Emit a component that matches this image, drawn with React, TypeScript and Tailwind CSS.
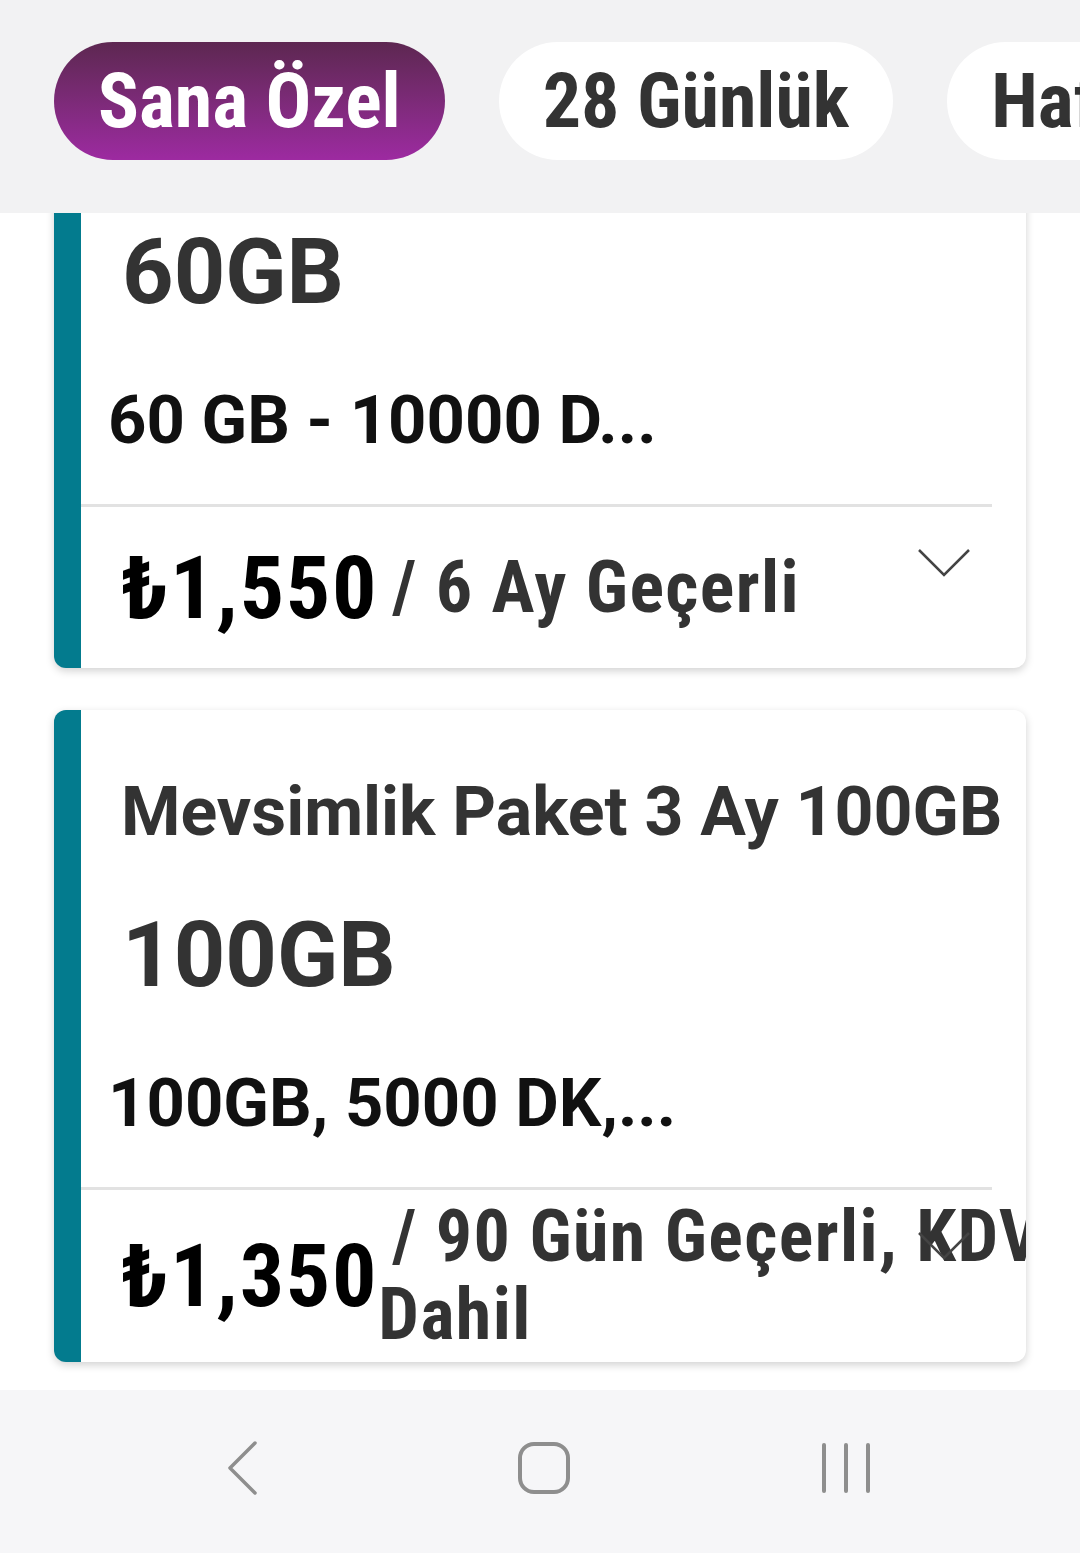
import React from "react";

const narrow = "font-['Liberation_Sans_Narrow','Roboto_Condensed',Roboto,sans-serif]";
const roboto = "font-['Roboto',sans-serif]";

type Pkg = {
  title: string;
  size: string;
  desc: string;
  price: string;
  terms: string;
};

const packages: Pkg[] = [
  {
    title: "Mevsimlik Paket 6 Ay 60GB",
    size: "60GB",
    desc: "60 GB - 10000 D...",
    price: "₺1,550",
    terms: "/ 6 Ay Geçerli",
  },
  {
    title: "Mevsimlik Paket 3 Ay 100GB",
    size: "100GB",
    desc: "100GB, 5000 DK,...",
    price: "₺1,350",
    terms: "/ 90 Gün Geçerli, KDV Dahil",
  },
];

function Chevron() {
  return (
    <svg width="56" height="32" viewBox="0 0 56 32" fill="none" className="absolute top-[40px] right-[54px]">
      <path d="M3 3 L28 28 L53 3" stroke="#444" strokeWidth="2.5" />
    </svg>
  );
}

function PackageCard({ pkg }: { pkg: Pkg }) {
  return (
    <div className="relative bg-white rounded-xl border-l-[27px] border-[#037b8e] shadow-[0_3px_8px_rgba(0,0,0,0.18)] overflow-hidden">
      <div className={`${roboto} pt-[62px]`}>
        <div className="pl-[40px] text-[68px] leading-[80px] font-bold text-[#333] whitespace-nowrap">{pkg.title}</div>
        <div className="pl-[41px] mt-[54px] text-[90px] leading-[100px] font-bold text-[#333]">{pkg.size}</div>
        <div className="pl-[27px] mt-[58px] text-[67px] leading-[78px] font-bold text-[#111]">{pkg.desc}</div>
      </div>
      <div className="mt-[45px] mr-[34px] h-[3px] bg-[#e2e2e2]" />
      <div className={`relative ${narrow} min-h-[161px] py-[8px] pl-[40px] flex items-center`}>
        <div className="text-[88px] leading-[96px] tracking-[0.02em] font-bold text-black whitespace-nowrap">{pkg.price}</div>
        <div className="w-[700px] shrink-0 indent-[14px] text-[72px] leading-[78px] tracking-[0.02em] font-bold text-[#333]">
          {pkg.terms}
        </div>
        <Chevron />
      </div>
    </div>
  );
}

export default function App() {
  return (
    <div className="w-[1080px] h-[1553px] flex flex-col bg-white overflow-hidden">
      <div className={`${narrow} h-[213px] shrink-0 bg-[#f2f2f3] pl-[54px] pt-[42px] flex items-start gap-[54px] overflow-hidden`}>
        <div className="shrink-0 h-[118px] px-[44px] rounded-full bg-gradient-to-b from-[#5d2751] to-[#9d2aa1] flex items-center text-white text-[76px] font-bold">
          Sana Özel
        </div>
        <div className="shrink-0 h-[118px] px-[44px] rounded-full bg-white flex items-center text-[#333] text-[76px] font-bold">
          28 Günlük
        </div>
        <div className="shrink-0 h-[118px] px-[44px] rounded-full bg-white flex items-center text-[#333] text-[76px] font-bold">
          Haftalık
        </div>
      </div>

      <div className="flex-1 overflow-hidden">
        <div className="-mt-[186px] px-[54px] flex flex-col gap-[42px]">
          {packages.map((p) => (
            <PackageCard key={p.title} pkg={p} />
          ))}
        </div>
      </div>

      <div className="h-[163px] shrink-0 bg-[#f6f6f8] flex items-center justify-center pl-[8px] pb-[8px]">
        <div className="w-[302px] flex justify-center">
          <svg width="34" height="56" viewBox="0 0 34 56" fill="none">
            <path d="M30 3 L5 28 L30 53" stroke="#8e8e8e" strokeWidth="3.5" strokeLinecap="round" strokeLinejoin="round" />
          </svg>
        </div>
        <div className="w-[302px] flex justify-center">
          <div className="w-[52px] h-[52px] rounded-[16px] border-[4px] border-[#8e8e8e]" />
        </div>
        <div className="w-[302px] flex justify-center gap-[18px]">
          <div className="w-[4px] h-[50px] rounded-full bg-[#8e8e8e]" />
          <div className="w-[4px] h-[50px] rounded-full bg-[#8e8e8e]" />
          <div className="w-[4px] h-[50px] rounded-full bg-[#8e8e8e]" />
        </div>
      </div>
    </div>
  );
}
